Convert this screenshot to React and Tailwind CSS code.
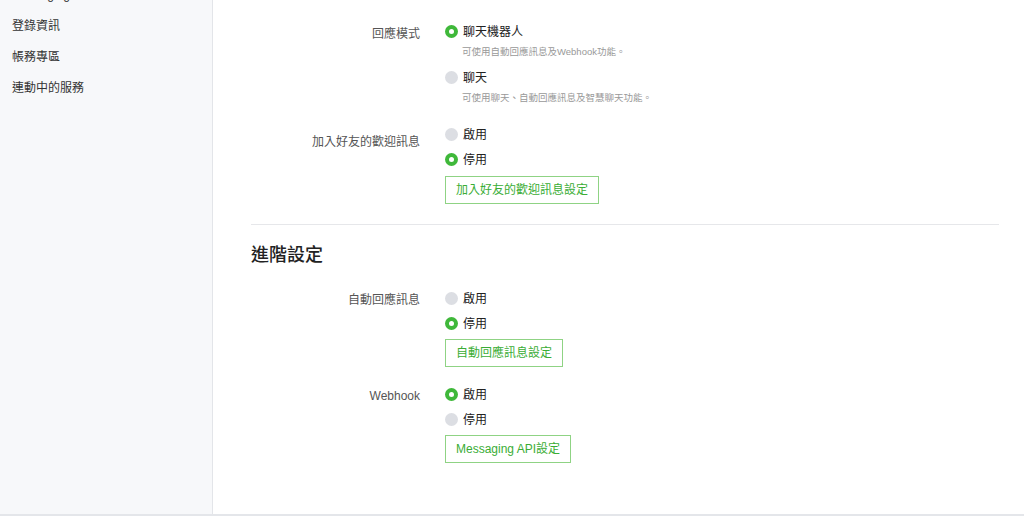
import React from "react";

const font = { fontFamily: '"Liberation Sans", "Noto Sans CJK TC", sans-serif' };

function Radio({ checked, label }) {
  return (
    <div className="flex h-[25px] items-center">
      {checked ? (
        <span className="flex h-[13px] w-[13px] items-center justify-center rounded-full bg-[#3fb83a]">
          <span className="h-[5px] w-[5px] rounded-full bg-white" />
        </span>
      ) : (
        <span className="h-[13px] w-[13px] rounded-full bg-[#dcdee3]" />
      )}
      <span className="ml-[5px] text-[12px] text-[#222]">{label}</span>
    </div>
  );
}

function Desc({ children }) {
  return <div className="ml-[17px] mt-[1px] h-[14px] text-[9.5px] leading-[14px] text-[#999]">{children}</div>;
}

function Btn({ children, className = "mt-[4px]" }) {
  return (
    <div className={"flex " + className}>
      <div className="flex h-[28px] items-center border border-[#8fd384] px-[10px] text-[12px] text-[#3aad35]">
        {children}
      </div>
    </div>
  );
}

function Row({ label, labelClass = "", children, className = "" }) {
  return (
    <div className={"flex " + className}>
      <div className={"w-[169px] shrink-0 text-right text-[12px] text-[#555] " + labelClass}>{label}</div>
      <div className="ml-[25px] flex flex-col">{children}</div>
    </div>
  );
}

export default function App() {
  return (
    <div className="flex h-[516px] w-[1024px] overflow-hidden border-b-2 border-[#e4e6ea] bg-white" style={font}>
      <aside className="w-[213px] shrink-0 border-r border-[#e3e5e9] bg-[#f7f8fa]">
        <div className="-mt-[21px] flex flex-col text-[12px] text-[#333]">
          {["Messaging API", "登錄資訊", "帳務專區", "連動中的服務"].map((t) => (
            <div key={t} className="flex h-[31px] items-center pl-[12px]">{t}</div>
          ))}
        </div>
      </aside>
      <main className="flex-1 pl-[38px] pr-[25px] pt-[19px]">
        <Row label="回應模式" labelClass="pt-[6px]">
          <Radio checked label="聊天機器人" />
          <Desc>可使用自動回應訊息及Webhook功能。</Desc>
          <div className="h-[6px]" />
          <Radio label="聊天" />
          <Desc>可使用聊天、自動回應訊息及智慧聊天功能。</Desc>
        </Row>
        <Row label="加入好友的歡迎訊息" labelClass="pt-[11px]" className="mt-[17px]">
          <Radio label="啟用" />
          <Radio checked label="停用" />
          <Btn>加入好友的歡迎訊息設定</Btn>
        </Row>
        <div className="mt-[20px] h-px bg-[#e6e7ea]" />
        <h2 className="mt-[17px] text-[18px] font-medium text-[#222]">進階設定</h2>
        <Row label="自動回應訊息" labelClass="pt-[5px]" className="mt-[17px]">
          <Radio label="啟用" />
          <Radio checked label="停用" />
          <Btn className="mt-[3px]">自動回應訊息設定</Btn>
        </Row>
        <Row label="Webhook" labelClass="pt-[5px]" className="mt-[15px]">
          <Radio checked label="啟用" />
          <Radio label="停用" />
          <Btn className="mt-[3px]">Messaging API設定</Btn>
        </Row>
      </main>
    </div>
  );
}
